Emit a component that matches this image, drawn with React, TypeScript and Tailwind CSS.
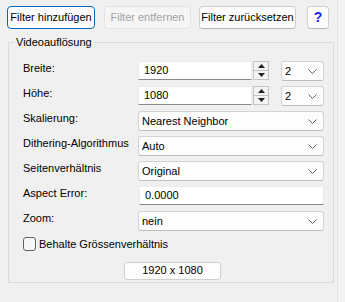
import { ReactNode } from "react";

const font = { fontFamily: '"Liberation Sans", Arial, sans-serif' };

function Chevron() {
  return (
    <svg width="9" height="5" viewBox="0 0 9 5" className="shrink-0">
      <path d="M0.5 0.5 L4.5 4.5 L8.5 0.5" fill="none" stroke="#5f5f5f" strokeWidth="1" />
    </svg>
  );
}

function Combo({ value, className = "" }: { value: string; className?: string }) {
  return (
    <div
      className={
        "flex h-[20px] items-center justify-between rounded-[3px] border border-[#d3d3d3] border-b-[#bdbdbd] bg-[#fdfdfd] pl-[3px] pr-[6px] " +
        className
      }
    >
      <span>{value}</span>
      <Chevron />
    </div>
  );
}

function TextField({ value, className = "" }: { value: string; className?: string }) {
  return (
    <div
      className={
        "flex h-[19px] items-center border border-[#ebebeb] border-b-[#8a8a8a] bg-white pl-[5px] " + className
      }
    >
      {value}
    </div>
  );
}

function SpinBox({ value }: { value: string }) {
  return (
    <div className="flex h-[19px] w-[131px] shrink-0">
      <TextField value={value} className="flex-1" />
      <div className="ml-[1px] flex w-[16px] flex-col border border-[#c4c4c4] bg-[#f4f4f4]">
        <div className="flex flex-1 items-center justify-center border-b border-[#c4c4c4]">
          <svg width="7" height="4" viewBox="0 0 7 4">
            <path d="M0 4 L3.5 0 L7 4 Z" fill="#222" />
          </svg>
        </div>
        <div className="flex flex-1 items-center justify-center">
          <svg width="7" height="4" viewBox="0 0 7 4">
            <path d="M0 0 L3.5 4 L7 0 Z" fill="#222" />
          </svg>
        </div>
      </div>
    </div>
  );
}

function Row({ label, children }: { label: string; children: ReactNode }) {
  return (
    <div className="flex h-[20px] items-start">
      <div className="w-[115px] shrink-0 leading-[14px]">{label}</div>
      <div className="flex flex-1 items-start">{children}</div>
    </div>
  );
}

export default function App() {
  return (
    <div className="flex h-[302px] w-[345px] bg-[#f0f0f0] text-[11px] text-black" style={font}>
      <div className="flex w-[337px] shrink-0 flex-col">
        <div className="flex items-center pl-[7px] pt-[6px]">
          <button className="h-[23px] w-[88px] rounded-[4px] border border-[#0067c0] bg-[#fdfdfd]">
            Filter hinzufügen
          </button>
          <button className="ml-[9px] h-[23px] w-[87px] rounded-[4px] border border-[#e3e3e3] bg-[#f5f5f5] text-[#a3a3a3]">
            Filter entfernen
          </button>
          <button className="ml-[8px] h-[23px] w-[97px] rounded-[4px] border border-[#d0d0d0] border-b-[#b8b8b8] bg-[#fdfdfd]">
            Filter zurücksetzen
          </button>
          <button className="ml-[11px] h-[23px] w-[22px] rounded-[4px] border border-[#d0d0d0] border-b-[#b8b8b8] bg-[#fdfdfd] text-[14px] font-bold text-[#1a1aff]">
            ?
          </button>
        </div>

        <fieldset className="ml-[8px] mt-[7px] h-[247px] w-[326px] border border-[#dcdcdc] pl-[14px] pr-[9px]">
          <legend className="ml-[-9px] px-[2px] leading-[13px]">Videoauflösung</legend>
          <div className="mt-[12px] flex flex-col gap-[5px]">
            <Row label="Breite:">
              <SpinBox value="1920" />
              <Combo value="2" className="ml-[12px] flex-1" />
            </Row>
            <Row label="Höhe:">
              <SpinBox value="1080" />
              <Combo value="2" className="ml-[12px] flex-1" />
            </Row>
            <Row label="Skalierung:">
              <Combo value="Nearest Neighbor" className="flex-1" />
            </Row>
            <Row label="Dithering-Algorithmus">
              <Combo value="Auto" className="flex-1" />
            </Row>
            <Row label="Seitenverhältnis">
              <Combo value="Original" className="flex-1" />
            </Row>
            <Row label="Aspect Error:">
              <TextField value="0.0000" className="ml-[1px] flex-1" />
            </Row>
            <Row label="Zoom:">
              <Combo value="nein" className="flex-1" />
            </Row>
          </div>
          <label className="mt-[5px] flex items-center">
            <span className="h-[14px] w-[13px] rounded-[3px] border border-[#606060] bg-[#f7f7f7]" />
            <span className="ml-[3px]">Behalte Grössenverhältnis</span>
          </label>
          <div className="mt-[9px] flex justify-center pr-[2px]">
            <div className="flex h-[18px] w-[97px] items-center justify-center rounded-[3px] border border-[#d0d0d0] bg-[#fdfdfd]">
              1920 x 1080
            </div>
          </div>
        </fieldset>
      </div>
      <div className="flex-1 border-l border-[#e2e2e2] bg-[#f2f2f2]" />
    </div>
  );
}
